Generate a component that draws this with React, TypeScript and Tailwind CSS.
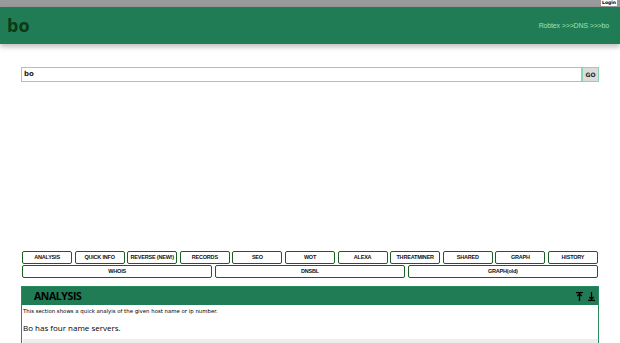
import React from "react";

const row1 = ["ANALYSIS","QUICK INFO","REVERSE (NEW!)","RECORDS","SEO","WOT","ALEXA","THREATMINER","SHARED","GRAPH","HISTORY"];
const row2 = ["WHOIS","DNSBL","GRAPH(old)"];

function Btn({ label }: { label: string }) {
  return (
    <div className="h-[13px] border-[1.5px] border-[#1d5c22] rounded-[2px] bg-white flex items-center justify-center text-[5.5px] font-bold text-[#111] tracking-[-0.2px] leading-none whitespace-nowrap overflow-hidden" style={{ fontFamily: '"Liberation Sans", sans-serif' }}>
      {label}
    </div>
  );
}

export default function App() {
  return (
    <div className="w-[620px] h-[343px] overflow-hidden bg-white relative" style={{ fontFamily: '"DejaVu Sans", sans-serif' }}>
      <div className="h-[7px] bg-[#9a9a9a] flex justify-end items-start pr-[3px]">
        <div className="bg-white h-[6px] px-[1px] text-[4.5px] font-bold leading-[6px] text-black">Login</div>
      </div>
      <div className="h-[37px] bg-[#1f7c55] flex items-center justify-between pl-[7px] pr-[11px] shadow-[0_3px_5px_rgba(0,0,0,0.25)]">
        <div className="text-[18px] font-bold text-[#0d3a12] leading-none pb-[1px]" style={{ fontFamily: '"Open Sans", sans-serif' }}>bo</div>
        <div className="text-[7px] text-[#9fe0b5] leading-none tracking-[-0.15px]" style={{ fontFamily: '"Liberation Sans", sans-serif' }}>Robtex &gt;&gt;&gt;DNS &gt;&gt;&gt;bo</div>
      </div>
      <div className="px-[21px] pt-[23px]">
        <div className="flex h-[15px]">
          <div className="flex-1 border-[1.5px] border-[#8fd4b0] flex items-center pl-[2px] text-[7px] font-bold text-[#222]">bo</div>
          <div className="w-[17px] border-[1.5px] border-[#8fd4b0] bg-[#dcdcdc] flex items-center justify-center text-[6px] font-bold text-[#222]">GO</div>
        </div>
        <div className="mt-[169px] px-[1px]">
          <div className="grid grid-cols-11 gap-x-[2.5px]">
            {row1.map((l) => <Btn key={l} label={l} />)}
          </div>
          <div className="grid grid-cols-3 gap-x-[2.5px] mt-[1px]">
            {row2.map((l) => <Btn key={l} label={l} />)}
          </div>
        </div>
        <div className="mt-[8px] border-x-[1.5px] border-t border-[#2a8a60]">
          <div className="h-[18px] bg-[#1f7c55] flex items-center justify-between pl-[12px] pr-[3px]">
            <div className="text-[10.5px] font-bold text-black leading-none tracking-[-0.4px]" style={{ fontFamily: '"Open Sans", sans-serif' }}>ANALYSIS</div>
            <div className="flex gap-[5px] items-center">
              <svg width="7" height="9" viewBox="0 0 7 9"><path d="M0 0.7h7M3.5 1.5v7.5M1.3 4l2.2-2.2 2.2 2.2" stroke="#000" strokeWidth="1.3" fill="none"/></svg>
              <svg width="7" height="9" viewBox="0 0 7 9"><path d="M0 8.3h7M3.5 0v7.5M1.3 5l2.2 2.2 2.2-2.2" stroke="#000" strokeWidth="1.3" fill="none"/></svg>
            </div>
          </div>
          <div className="bg-white pl-[1px]">
            <div className="text-[5.4px] text-black pt-[2px] leading-[8px]">This section shows a quick analyis of the given host name or ip number.</div>
            <div className="text-[8px] font-medium text-black mt-[8px] leading-[10px]" style={{ fontFamily: '"Open Sans", sans-serif' }}>Bo has four name servers.</div>
            <div className="h-[6px] bg-[#ededed] mt-[6px]"></div>
          </div>
        </div>
      </div>
    </div>
  );
}
